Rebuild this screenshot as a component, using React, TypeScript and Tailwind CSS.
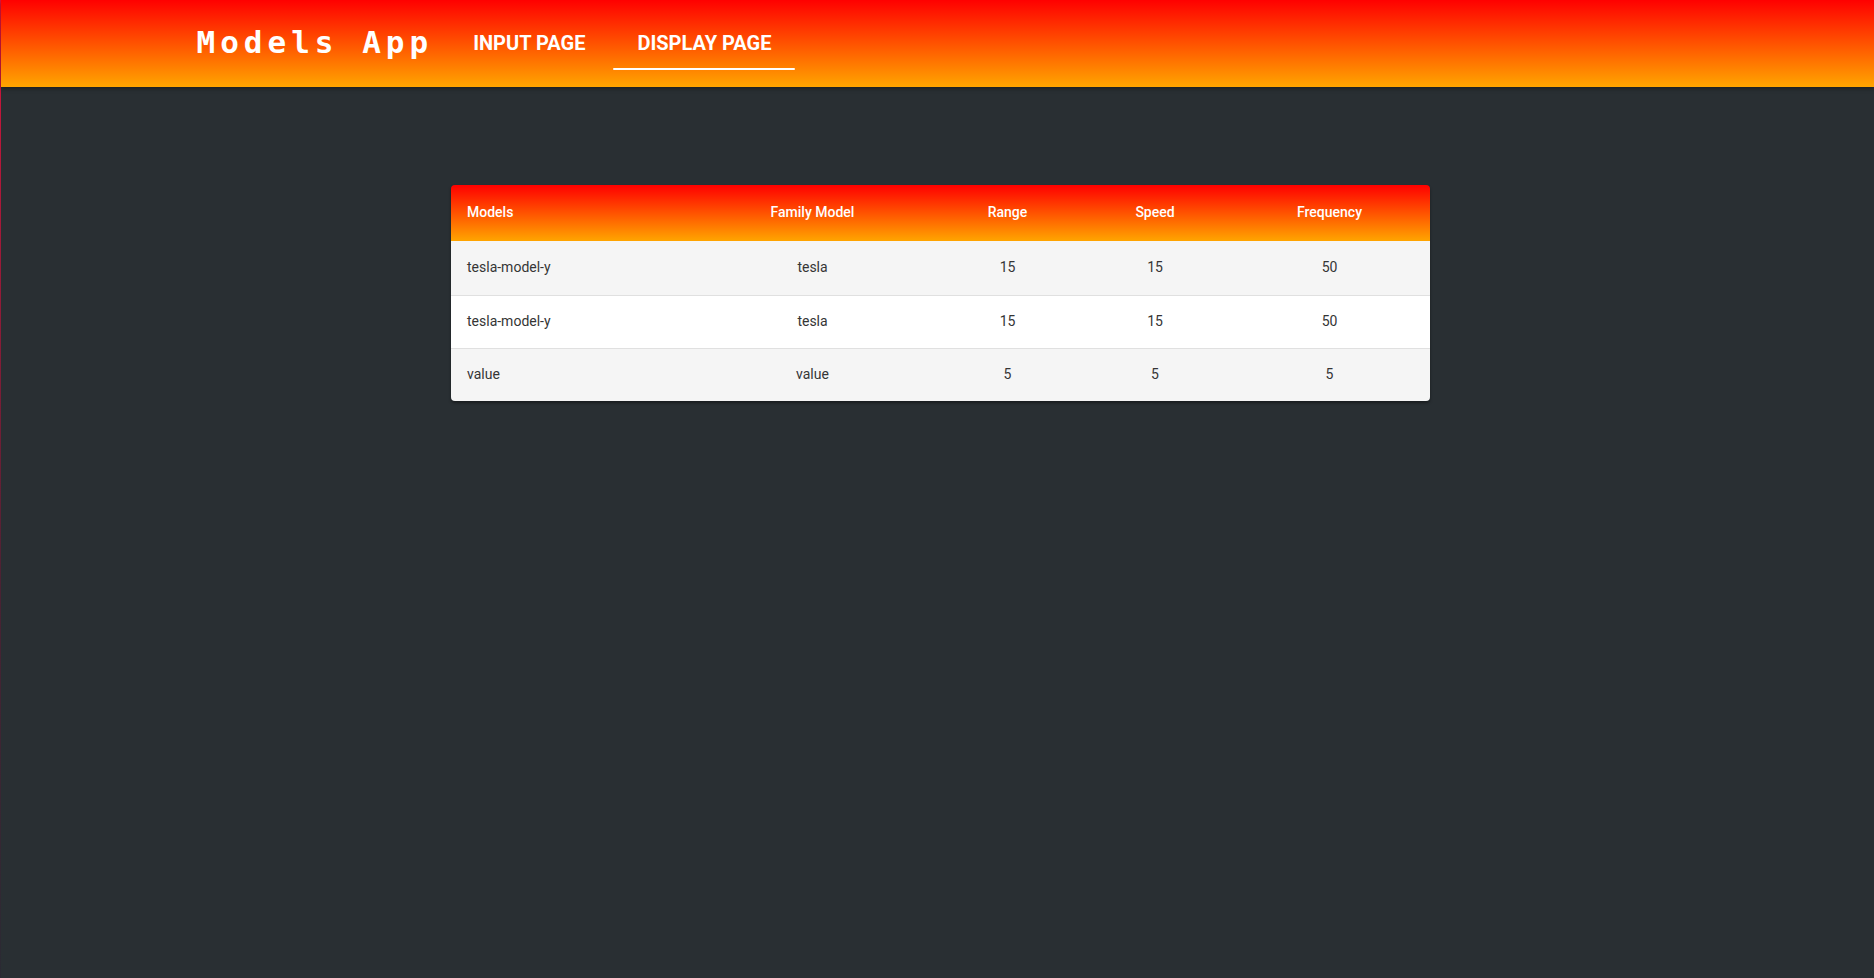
import React from 'react'

const rows = [
  {model: 'tesla-model-y', family: 'tesla', range: 15, speed: 15, frequency: 50},
  {model: 'tesla-model-y', family: 'tesla', range: 15, speed: 15, frequency: 50},
  {model: 'value', family: 'value', range: 5, speed: 5, frequency: 5},
]

const navItems = [
  {name: 'INPUT PAGE', active: false},
  {name: 'DISPLAY PAGE', active: true},
]

export default function App() {
  return (
    <div className="flex min-h-screen bg-[#292f33]" style={{fontFamily: 'Roboto, "Noto Sans", sans-serif'}}>
      <div className="w-px shrink-0 bg-[linear-gradient(to_bottom,#dc143c,#4a2233_60%,#2a2a33)]" />
      <div className="flex-1 min-w-0">
        <header className="h-[87px] bg-[linear-gradient(to_bottom,#ff0000,#ffa500)] shadow-[0_2px_4px_rgba(0,0,0,0.35)]">
          <div className="max-w-[1536px] mx-auto pl-[27px] pr-6 h-full flex items-center">
            <span
              className="text-[31px] font-bold tracking-[5px] text-white leading-none pb-[2px]"
              style={{fontFamily: '"DejaVu Sans Mono", monospace'}}
            >
              Models App
            </span>
            <nav className="flex ml-[16px] h-full">
              {navItems.map((item) => (
                <a
                  key={item.name}
                  className="relative flex items-center px-[24px] mr-[4px] text-[20px] font-bold text-white cursor-pointer"
                >
                  <span className="pb-[2px]">{item.name}</span>
                  {item.active && (
                    <span className="absolute left-0 right-0 top-[68px] h-[2px] bg-white rounded-full" />
                  )}
                </a>
              ))}
            </nav>
          </div>
        </header>

        <main className="pt-[98px] pl-[6px]">
          <div className="mx-auto w-[979px] rounded-[4px] overflow-hidden shadow-[0_2px_3px_rgba(0,0,0,0.4)]">
            <table className="w-full border-collapse text-[14px]">
              <thead>
                <tr className="h-[56px] bg-[linear-gradient(to_bottom,#ff0000,#ffa500)] text-white">
                  <th className="w-[240px] text-left pl-4 pb-[2px] font-medium">Models</th>
                  <th className="w-[243px] text-center pb-[2px] font-medium">Family Model</th>
                  <th className="w-[147px] text-center pb-[2px] font-medium">Range</th>
                  <th className="w-[148px] text-center pb-[2px] font-medium">Speed</th>
                  <th className="w-[201px] text-center pb-[2px] font-medium">Frequency</th>
                </tr>
              </thead>
              <tbody className="text-[#353535]">
                {rows.map((row, i) => (
                  <tr
                    key={i}
                    className={
                      (i % 2 === 0 ? 'bg-[#f5f5f5]' : 'bg-white') +
                      (i < rows.length - 1 ? ' border-b border-[#e0e0e0]' : '') +
                      (i === 0 ? ' h-[54px]' : ' h-[53px]')
                    }
                  >
                    <td className="text-left pl-4">{row.model}</td>
                    <td className="text-center">{row.family}</td>
                    <td className="text-center">{row.range}</td>
                    <td className="text-center">{row.speed}</td>
                    <td className="text-center">{row.frequency}</td>
                  </tr>
                ))}
              </tbody>
            </table>
          </div>
        </main>
      </div>
    </div>
  )
}
